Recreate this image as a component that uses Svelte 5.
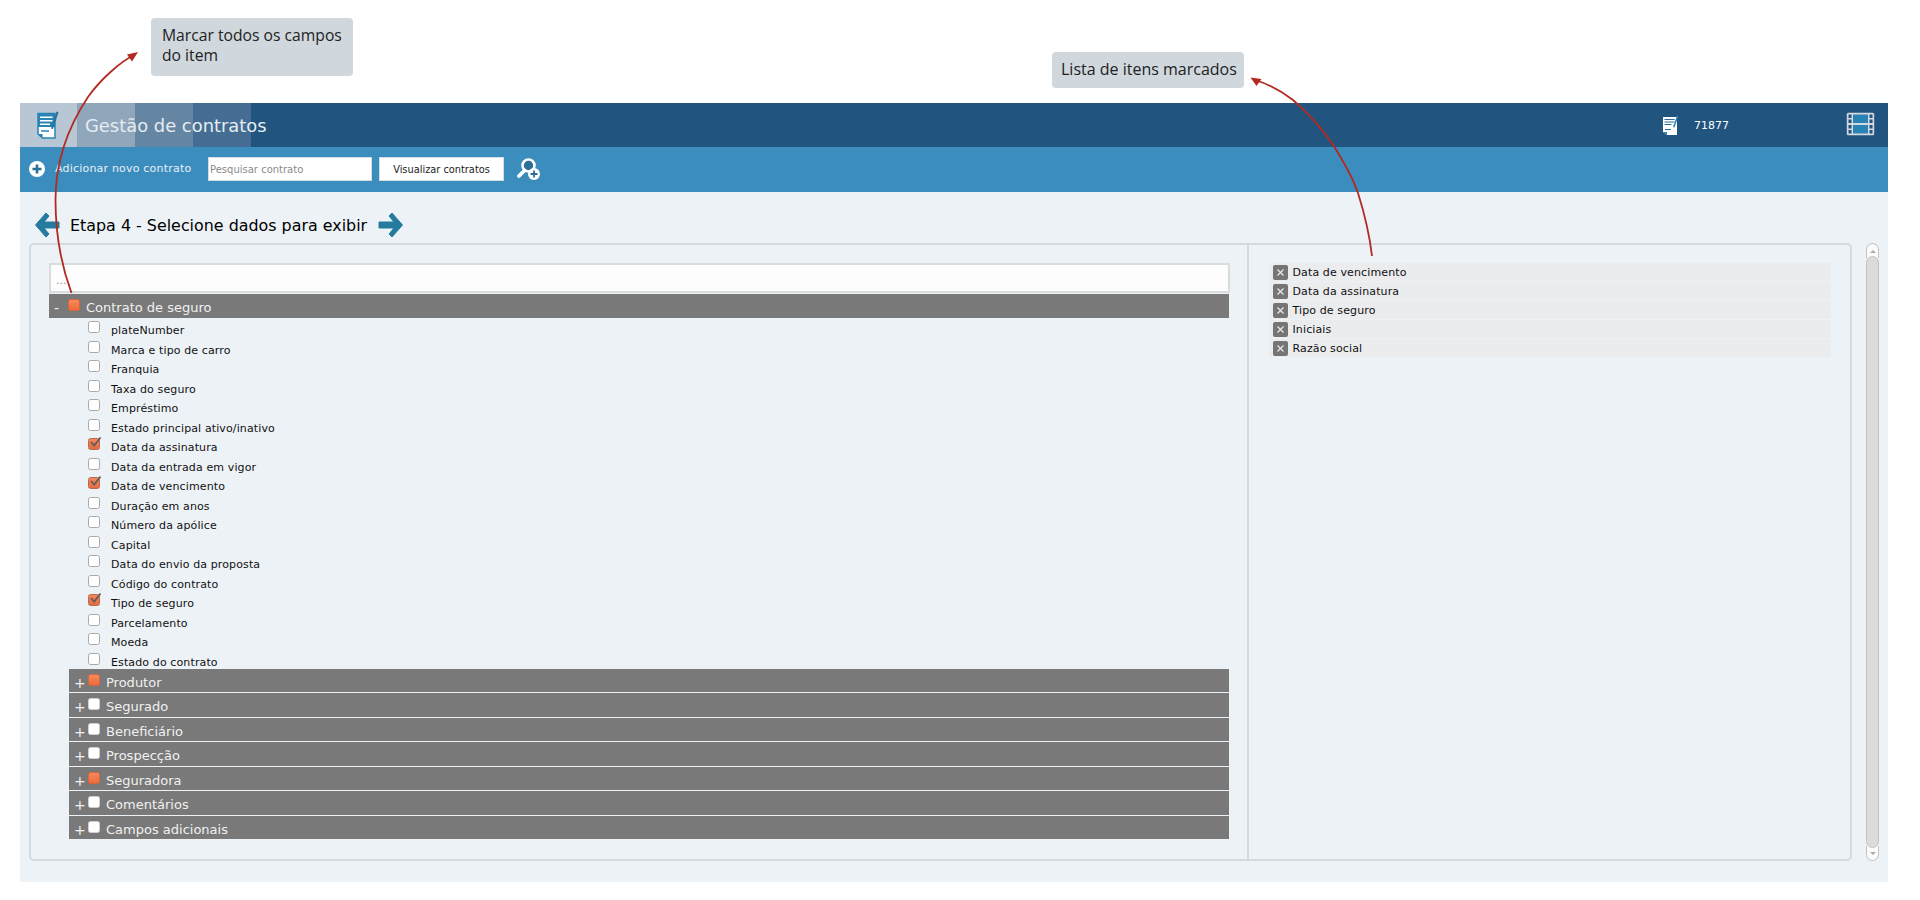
<script>
  const fields = [
    ['plateNumber', false], ['Marca e tipo de carro', false], ['Franquia', false], ['Taxa do seguro', false],
    ['Empréstimo', false], ['Estado principal ativo/inativo', false], ['Data da assinatura', true],
    ['Data da entrada em vigor', false], ['Data de vencimento', true], ['Duração em anos', false],
    ['Número da apólice', false], ['Capital', false], ['Data do envio da proposta', false],
    ['Código do contrato', false], ['Tipo de seguro', true], ['Parcelamento', false], ['Moeda', false],
    ['Estado do contrato', false]
  ];
  const groups = [
    ['Produtor', true], ['Segurado', false], ['Beneficiário', false], ['Prospecção', false],
    ['Seguradora', true], ['Comentários', false], ['Campos adicionais', false]
  ];
  const selected = ['Data de vencimento', 'Data da assinatura', 'Tipo de seguro', 'Iniciais', 'Razão social'];
</script>

<div class="page">
  <header class="topbar">
    <div class="tab t1">
      <svg class="docicon" viewBox="0 0 22 29" width="22" height="29">
        <path d="M1 3.500H18V28H5.500L1 24z" fill="#fff" stroke="#2a83b5" stroke-width="1.500"/>
        <path d="M1 3.500H18V17H1z" fill="#2a83b5"/>
        <path d="M3 7.200h12.500M3 10.800h12.500M3 14.300h10" stroke="#fff" stroke-width="1.500"/>
        <path d="M4 21h8" stroke="#2a83b5" stroke-width="1.500"/>
        <path d="M1 24h4.500v4z" fill="#2a83b5"/>
        <path d="M14 18.500L19.500 1.500 21.500 2.200 16 19z" fill="#24759f"/>
      </svg>
    </div>
    <div class="tab t2"></div>
    <div class="tab t3"></div>
    <div class="tab t4"></div>
    <h1 class="title">Gestão de contratos</h1>
    <div class="stat">
      <svg viewBox="0 0 16 20" width="16" height="20">
        <path d="M0 2H14V20H4L0 17z" fill="#fff"/>
        <path d="M1.500 4.500h10M1.500 7h10M1.500 9.500h7M2 14.500h6" stroke="#2a6f9c" stroke-width="1.200"/>
        <path d="M0 17h4v3z" fill="#2a83b5"/>
        <path d="M10 12L14 .5 15.500 1 11.500 12.500z" fill="#2a83b5"/>
      </svg>
      <span>71877</span>
    </div>
    <svg class="film" viewBox="0 0 29 24" width="29" height="24">
      <rect x="0.800" y="0.800" width="27.400" height="22.400" rx="1.500" fill="#d3d9de"/>
      <rect x="7" y="2.500" width="15" height="8.500" fill="#2a83b5"/>
      <rect x="7" y="13" width="15" height="8.500" fill="#2a83b5"/>
      <g fill="#21547f">
        <rect x="2.500" y="2.500" width="3" height="3.500"/><rect x="2.500" y="7.500" width="3" height="3.500"/>
        <rect x="2.500" y="13" width="3" height="3.500"/><rect x="2.500" y="18" width="3" height="3.500"/>
        <rect x="23.500" y="2.500" width="3" height="3.500"/><rect x="23.500" y="7.500" width="3" height="3.500"/>
        <rect x="23.500" y="13" width="3" height="3.500"/><rect x="23.500" y="18" width="3" height="3.500"/>
      </g>
    </svg>
  </header>

  <nav class="toolbar">
    <svg class="plus" viewBox="0 0 16 16" width="16" height="16">
      <circle cx="8" cy="8" r="8" fill="#fff"/>
      <path d="M8 3.500v9M3.500 8h9" stroke="#2a6f96" stroke-width="2.600"/>
    </svg>
    <span class="add">Adicionar novo contrato</span>
    <input class="search" placeholder="Pesquisar contrato" />
    <button class="view">Visualizar contratos</button>
    <svg class="usersearch" viewBox="0 0 23 22" width="23" height="22">
      <circle cx="11.500" cy="7.500" r="6" fill="#2a6f96" stroke="#fff" stroke-width="2.600"/>
      <path d="M7.500 12.500L2 18" stroke="#fff" stroke-width="3.800" stroke-linecap="round"/>
      <circle cx="17" cy="16" r="6" fill="#fff"/>
      <path d="M17 12.500v7M13.500 16h7" stroke="#2a6f96" stroke-width="1.800"/>
    </svg>
  </nav>

  <main class="content">
    <div class="step">
      <svg viewBox="0 0 26 26" width="26" height="26"><path d="M12 1L1.500 13 12 25l3-3-5-6h15v-6H10l5-6z" fill="#247a9f" stroke="#247a9f" stroke-linejoin="round"/></svg>
      <h2>Etapa 4 - Selecione dados para exibir</h2>
      <svg viewBox="0 0 26 26" width="26" height="26"><path d="M14 1l10.500 12L14 25l-3-3 5-6H1v-6h15l-5-6z" fill="#247a9f" stroke="#247a9f" stroke-linejoin="round"/></svg>
    </div>

    <div class="workspace">
      <section class="panel">
        <div class="left">
          <div class="filter">...</div>
          <div class="grouphead root">
            <span class="sign minus">-</span>
            <span class="box partial"></span>
            <span>Contrato de seguro</span>
          </div>
          <ul class="fields">
            {#each fields as [label, on]}
              <li>
                <span class="box" class:checked={on}>
                  {#if on}
                    <svg viewBox="0 0 14 14" width="14" height="14"><path d="M3 6l3.200 3.500L12.500 1.500" fill="none" stroke="#6a5a52" stroke-width="1.800"/></svg>
                  {/if}
                </span>
                <span class="label">{label}</span>
              </li>
            {/each}
          </ul>
          {#each groups as [label, on]}
            <div class="grouphead sub">
              <span class="sign">+</span>
              <span class="box" class:partial={on}></span>
              <span>{label}</span>
            </div>
          {/each}
        </div>
        <div class="right">
          {#each selected as s}
            <div class="sel">
              <span class="x"><svg viewBox="0 0 15 15" width="15" height="15"><path d="M4.500 4.500l6 6M10.500 4.500l-6 6" stroke="#eee" stroke-width="1.100"/></svg></span>
              <span>{s}</span>
            </div>
          {/each}
        </div>
      </section>
      <div class="scroll">
        <div class="sbtn up"><i></i></div>
        <div class="thumb"></div>
        <div class="sbtn down"><i></i></div>
      </div>
    </div>
  </main>

  <div class="note n1">Marcar todos os campos do item</div>
  <div class="note n2">Lista de itens marcados</div>
  <svg class="arrows" width="1920" height="300" viewBox="0 0 1920 300">
    <path d="M71.500 293C60 262 55.500 230 55.500 200C55.500 165 66 130 88 97C100 80 120 62 134 55" fill="none" stroke="#b22a22" stroke-width="1.800"/>
    <path d="M138 52l-11 2.500 5 7z" fill="#b22a22"/>
    <path d="M1372 256C1369 230 1364 212 1358 193C1352 175 1345 165 1334.500 147C1322 128 1308 113 1293 100C1280 90 1265 83 1255 80" fill="none" stroke="#b22a22" stroke-width="1.800"/>
    <path d="M1250.500 77.500l11 1.500-5 7z" fill="#b22a22"/>
  </svg>
</div>

<style>
  :global(body) { margin: 0; background: #fff; font-family: "DejaVu Sans", sans-serif; }
  .page { position: relative; height: 900px; padding: 103px 32px 0 20px; box-sizing: border-box; }
  .topbar { height: 44px; background: #21547f; display: flex; align-items: center; }
  .tab { width: 58px; height: 44px; flex: none; display: flex; align-items: center; justify-content: center; }
  .t1 { width: 57px; background: #b9c7d5; }
  .t2 { background: #90a6bb; }
  .t3 { background: #6586a3; }
  .t4 { background: #456c92; }
  .docicon { margin-top: -1px; margin-right: 2px; }
  .title { margin: 0 0 0 -166px; color: #e6ecf1; font-size: 17.900px; font-weight: 400; position: relative; }
  .stat { margin-left: auto; display: flex; align-items: center; gap: 15px; color: #fff; font-size: 11px; }
  .film { margin: 0 13px 3px 117px; }
  .toolbar { height: 45px; background: #3a8dbd; display: flex; align-items: center; padding: 0 0 1px 9px; box-sizing: border-box; }
  .add { margin-left: 10px; color: #e8eff5; font-size: 11px; letter-spacing: 0.200px; white-space: nowrap; width: 153px; margin-bottom: 2px; }
  .search { width: 164px; height: 24px; box-sizing: border-box; border: 1px solid #d5dbe0; background: #fff; padding: 0 1px; font: 10px "DejaVu Sans", sans-serif; margin: 0; }
  .search::placeholder { color: #8a8a8a; opacity: 1; }
  .view { width: 125px; height: 24px; margin: 0 0 0 7px; box-sizing: border-box; border: 1px solid #d5dbe0; background: #fff; color: #222; font: 9.800px "DejaVu Sans", sans-serif; padding: 0; }
  .usersearch { margin-left: 13px; }
  .content { height: 690px; background: #edf2f7; padding: 20px 0 0 9px; box-sizing: border-box; }
  .step { display: flex; align-items: center; height: 26px; margin-left: 5px; gap: 10px; }
  .step h2 { margin: 0 1px 0 0; font-size: 15.900px; font-weight: 400; color: #000; white-space: nowrap; }
  .workspace { display: flex; margin-top: 5px; }
  .panel { width: 1823px; height: 618px; box-sizing: border-box; border: 2px solid #d6dadd; border-radius: 5px; display: flex; }
  .left { width: 1218px; padding: 18px 0 0 18px; box-sizing: border-box; border-right: 2px solid #d6dadd; flex: none; }
  .filter { width: 1181px; height: 30px; box-sizing: border-box; border: 2px solid #d8dcdc; background: #fcfdfc; color: #999; font-size: 11px; padding: 8px 5px; line-height: 16px; }
  .grouphead { color: #f1f1f1; background: #797979; display: flex; align-items: flex-start; font-size: 13px; }
  .root { width: 1180px; height: 24px; margin-top: 1px; line-height: 28px; }
  .sub { margin-left: 20px; width: 1160px; height: 23.500px; margin-bottom: 1px; line-height: 28px; }
  .sign { width: 19px; padding-left: 5px; box-sizing: border-box; font-size: 14px; flex: none; }
  .minus { width: 19px; }
  .box { display: block; flex: none; position: relative; box-sizing: border-box; width: 12px; height: 12px; border-radius: 2.500px; border: 1px solid #a9a9a9; background: #fff; }
  .grouphead .box { margin: 5px 6px 0 0; border-color: #cfcfcf; }
  .grouphead .partial, .box.partial { background: linear-gradient(#f58a5a, #ef6a3a); border-color: #d8653c; }
  .box.checked { background: linear-gradient(#f08a62, #e56a42); border-color: #b86a4c; }
  .box svg { position: absolute; left: -1px; top: -3px; }
  .fields { list-style: none; margin: 0 0 0 39px; padding: 3.200px 0 0; height: 350.500px; box-sizing: border-box; }
  .fields li { height: 19.530px; display: flex; align-items: flex-start; color: #111; font-size: 11px; }
  .label { margin: 3px 0 0 11px; line-height: 14px; letter-spacing: 0.120px; white-space: nowrap; }
  .right { flex: 1; padding: 18px 20px 0 19.500px; }
  .sel { height: 18px; margin-bottom: 1px; width: 562px; background: #ebecee; display: flex; align-items: center; font-size: 11px; color: #111; letter-spacing: 0.120px; }
  .x { width: 15px; height: 15px; margin: 0 5px 0 4px; border-radius: 2px; background: #757575; display: block; flex: none; }
  .x svg { display: block; }
  .scroll { margin-left: 14px; width: 13px; height: 618px; display: flex; flex-direction: column; }
  .sbtn { height: 14px; box-sizing: border-box; background: #fbfbfb; border: 1px solid #c4c2c0; display: flex; align-items: center; justify-content: center; flex: none; }
  .up { border-radius: 6.500px 6.500px 0 0; border-bottom: 0; height: 15px; }
  .down { border-radius: 0 0 6.500px 6.500px; border-top: 0; height: 15px; }
  .sbtn i { width: 0; height: 0; border-left: 3px solid transparent; border-right: 3px solid transparent; }
  .up i { border-bottom: 3px solid #aaa; }
  .down i { border-top: 3px solid #aaa; }
  .thumb { flex: 1; box-sizing: border-box; background: #dcdbd9; border: 1px solid #c4c2c0; border-radius: 6.500px; margin: -2px 0; position: relative; }
  .note { position: absolute; background: #d0d7dd; border-radius: 4px; color: #222; font: 16px/20px "Open Sans", sans-serif; box-sizing: border-box; }
  .n1 { left: 151px; top: 18px; width: 202px; height: 58px; padding: 8px 4px 8px 11px; font-size: 15.700px; line-height: 19.500px; }
  .n2 { left: 1052px; top: 52px; width: 192px; height: 36px; padding: 7px 9px; white-space: nowrap; }
  .arrows { position: absolute; left: 0; top: 0; pointer-events: none; }
</style>
